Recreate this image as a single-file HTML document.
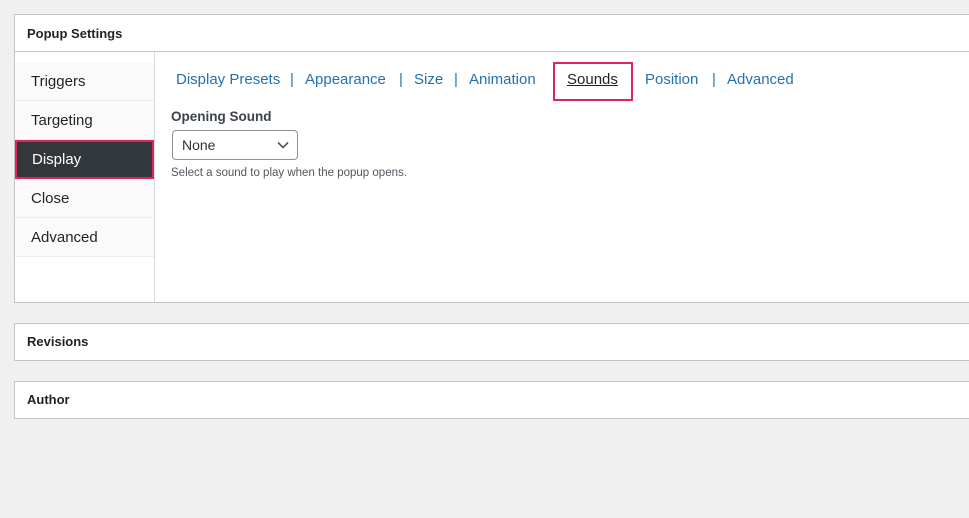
<!DOCTYPE html>
<html><head><style>
*{box-sizing:border-box;margin:0;padding:0}
body{width:969px;height:518px;background:#f0f0f1;font-family:"Liberation Sans",sans-serif;position:relative;overflow:hidden;color:#1d2327}
.box{position:absolute;left:14px;width:960px;background:#fff;border:1px solid #c3c4c7}
.hdr{font-size:13px;font-weight:bold;padding-left:12px}
.side{position:absolute;left:0;top:37px;width:140px;height:250px;background:#fff;border-right:1px solid #dcdcde}
.side div{height:39px;line-height:39px;padding-left:16px;font-size:15px;background:#fafafa;border-bottom:1px solid #ececec}
.side div.act{background:#32373c;color:#fff;border:2px solid #e0245e;padding-left:15px;line-height:35px;margin-left:0;width:139px}
.tabs{position:absolute;font-size:15px;color:#2271b1;white-space:nowrap}
.tabs span{position:absolute;top:0}
</style></head><body>
<div class="box" style="top:14px;height:289px">
 <div class="hdr" style="height:37px;line-height:37px;border-bottom:1px solid #c3c4c7">Popup Settings</div>
 <div class="side" style="top:37px">
  <div style="margin-top:10px">Triggers</div>
  <div>Targeting</div>
  <div class="act">Display</div>
  <div>Close</div>
  <div>Advanced</div>
 </div>
</div>
<div class="tabs" style="left:0;top:71px">
 <span style="left:176px">Display Presets</span><span style="left:290px">|</span>
 <span style="left:305px">Appearance</span><span style="left:399px">|</span>
 <span style="left:414px">Size</span><span style="left:454px">|</span>
 <span style="left:469px">Animation</span>
 <span style="left:567px;color:#1d2327;text-decoration:underline">Sounds</span>
 <span style="left:645px">Position</span><span style="left:712px">|</span>
 <span style="left:727px">Advanced</span>
</div>
<div style="position:absolute;left:553px;top:62px;width:80px;height:39px;border:2px solid #e0245e"></div>
<div style="position:absolute;left:171px;top:109px;font-size:13.5px;font-weight:bold;color:#3c434a">Opening Sound</div>
<div style="position:absolute;left:172px;top:130px;width:126px;height:30px;border:1px solid #8c8f94;border-radius:4px;font-size:14px;line-height:28px;padding-left:9px;color:#2c3338">None
 <svg style="position:absolute;right:8px;top:10px" width="12" height="8" viewBox="0 0 12 8"><path d="M1 1.5L6 6.5L11 1.5" fill="none" stroke="#50575e" stroke-width="1.6"/></svg>
</div>
<div style="position:absolute;left:171px;top:167px;font-size:11.5px;color:#50575e">Select a sound to play when the popup opens.</div>
<div class="box" style="top:323px;height:38px"><div class="hdr" style="line-height:36px">Revisions</div></div>
<div class="box" style="top:381px;height:38px"><div class="hdr" style="line-height:36px">Author</div></div>
</body></html>
